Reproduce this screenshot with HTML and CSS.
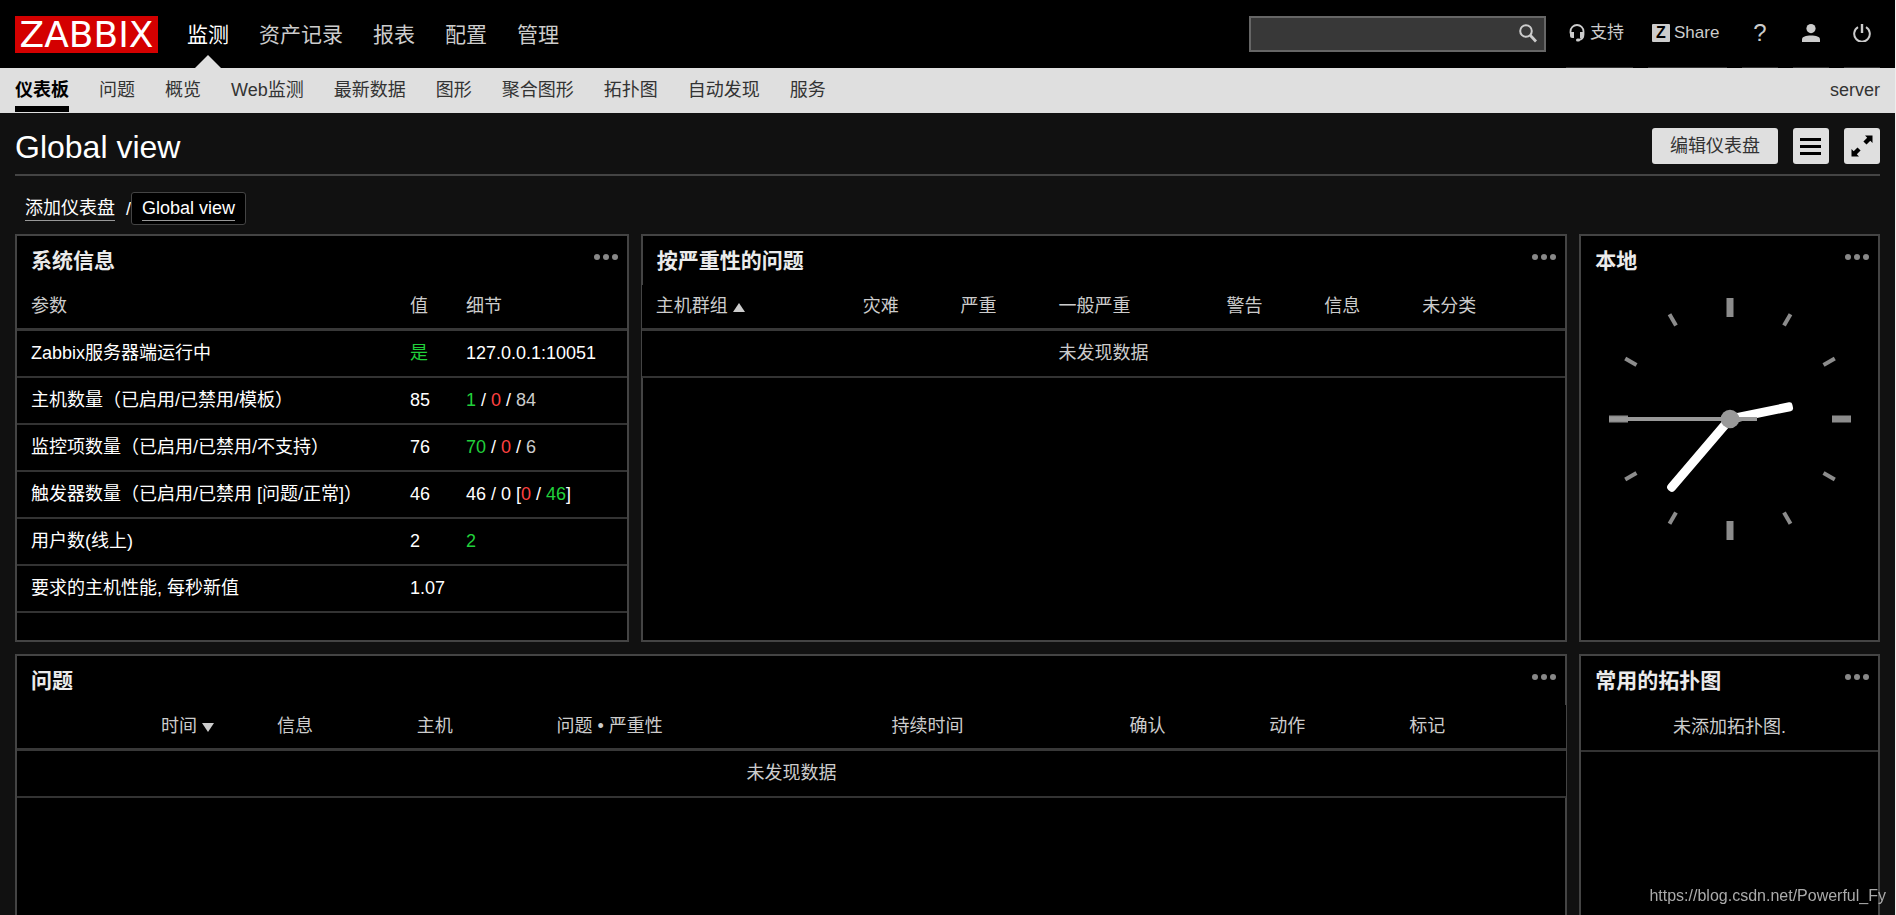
FILE: index.html
```
<!DOCTYPE html>
<html lang="zh-CN">
<head>
    <meta charset="UTF-8">
    <meta name="viewport" content="width=device-width, initial-scale=1.0">
    <title>Global view</title>
    <link rel="stylesheet" href="styles.css">
</head>
<body>
    <header>
        <div class="top-nav">
            <a class="logo" href="#">ZABBIX</a>
            <nav class="main-menu">
                <a class="selected" href="#">监测</a>
                <a href="#">资产记录</a>
                <a href="#">报表</a>
                <a href="#">配置</a>
                <a href="#">管理</a>
            </nav>
            <form class="search">
                <input type="text" aria-label="搜索">
                <button type="button" class="search-button" aria-label="搜索">
                    <svg width="20" height="20" viewBox="0 0 20 20"><circle cx="8" cy="7" r="5.8" fill="none" stroke="currentColor" stroke-width="2"/><path d="M12 11l6 6.5" stroke="currentColor" stroke-width="2.8"/></svg>
                </button>
            </form>
            <div class="user-menu">
                <a class="support" href="#">
                    <svg width="16" height="18" viewBox="0 0 16 18"><path d="M1.5 9.5V7.5a6.5 6.5 0 0 1 13 0v3c0 3-1.5 5-5 5.5" fill="none" stroke="currentColor" stroke-width="1.8"/><path d="M1 8h4v6H3.5A2.500 2.500 0 0 1 1 11.500zM11 8h4v3.5a2.500 2.500 0 0 1-2.500 2.500H11z" fill="currentColor"/><rect x="7" y="14.500" width="4" height="3" rx="1.500" fill="currentColor"/></svg>
                    支持
                </a>
                <a class="share" href="#">
                    <span class="share-logo">Z</span>
                    Share
                </a>
                <a class="icon help" href="#">?</a>
                <a class="icon" href="#" aria-label="用户">
                    <svg width="18" height="18" viewBox="0 0 18 18"><circle cx="9" cy="4.6" r="4.6" fill="currentColor"/><path d="M0 18v-2.500C0 12.500 4 11.500 9 11.500s9 1 9 4V18z" fill="currentColor"/></svg>
                </a>
                <a class="icon" href="#" aria-label="退出">
                    <svg width="18" height="18" viewBox="0 0 18 18"><path d="M5 3.2a7.800 7.800 0 1 0 8 0" fill="none" stroke="currentColor" stroke-width="2"/><path d="M9 0v9" stroke="currentColor" stroke-width="2.400"/></svg>
                </a>
            </div>
        </div>
        <div class="sub-nav">
            <nav class="sub-menu">
                <a class="selected" href="#">仪表板</a>
                <a href="#">问题</a>
                <a href="#">概览</a>
                <a href="#">Web监测</a>
                <a href="#">最新数据</a>
                <a href="#">图形</a>
                <a href="#">聚合图形</a>
                <a href="#">拓扑图</a>
                <a href="#">自动发现</a>
                <a href="#">服务</a>
            </nav>
            <span>server</span>
        </div>
    </header>

    <main>
        <div class="header-title">
            <h1>Global view</h1>
            <div class="controls">
                <button type="button" class="btn">编辑仪表盘</button>
                <button type="button" class="btn btn-icon" aria-label="操作">
                    <svg width="22" height="17" viewBox="0 0 22 17"><path d="M0 1.500h21M0 8.500h21M0 15.500h21" stroke="currentColor" stroke-width="3"/></svg>
                </button>
                <button type="button" class="btn btn-icon" aria-label="全屏">
                    <svg width="22" height="22" viewBox="0 0 22 22"><path d="M14 0.500H21.500V8L19.300 5.800 15.500 9.600 12.400 6.500 16.200 2.700zM8 21.500H0.500V14L2.700 16.200 6.500 12.400 9.600 15.500 5.800 19.300z" fill="currentColor"/></svg>
                </button>
            </div>
        </div>

        <div class="breadcrumbs">
            <a href="#">添加仪表盘</a>
            <span class="slash">/</span>
            <span class="current"><a href="#">Global view</a></span>
        </div>

        <div class="dashboard">
            <section class="widget span-4">
                <div class="widget-head">
                    <h4>系统信息</h4>
                    <button type="button" class="btn-more" aria-label="更多">
                        <svg width="24" height="16" viewBox="0 0 24 16"><circle cx="3" cy="8" r="3"/><circle cx="12" cy="8" r="3"/><circle cx="21" cy="8" r="3"/></svg>
                    </button>
                </div>
                <table class="system-info">
                    <thead>
                        <tr><th class="w-param">参数</th><th class="w-value">值</th><th>细节</th></tr>
                    </thead>
                    <tbody>
                        <tr><td>Zabbix服务器端运行中</td><td class="green">是</td><td>127.0.0.1:10051</td></tr>
                        <tr><td>主机数量（已启用/已禁用/模板）</td><td>85</td><td><span class="green">1</span> / <span class="red">0</span> / <span class="grey">84</span></td></tr>
                        <tr><td>监控项数量（已启用/已禁用/不支持）</td><td>76</td><td><span class="green">70</span> / <span class="red">0</span> / <span class="grey">6</span></td></tr>
                        <tr><td>触发器数量（已启用/已禁用 [问题/正常]）</td><td>46</td><td>46 / 0 [<span class="red">0</span> / <span class="green">46</span>]</td></tr>
                        <tr><td>用户数(线上)</td><td>2</td><td class="green">2</td></tr>
                        <tr><td>要求的主机性能, 每秒新值</td><td>1.07</td><td></td></tr>
                    </tbody>
                </table>
            </section>

            <section class="widget span-6">
                <div class="widget-head">
                    <h4>按严重性的问题</h4>
                    <button type="button" class="btn-more" aria-label="更多">
                        <svg width="24" height="16" viewBox="0 0 24 16"><circle cx="3" cy="8" r="3"/><circle cx="12" cy="8" r="3"/><circle cx="21" cy="8" r="3"/></svg>
                    </button>
                </div>
                <table class="severity">
                    <thead>
                        <tr>
                            <th class="w-group">主机群组<span class="arrow-up"></span></th>
                            <th>灾难</th>
                            <th>严重</th>
                            <th class="w-average">一般严重</th>
                            <th>警告</th>
                            <th>信息</th>
                            <th class="w-last">未分类</th>
                        </tr>
                    </thead>
                    <tbody>
                        <tr><td class="nothing" colspan="7">未发现数据</td></tr>
                    </tbody>
                </table>
            </section>

            <section class="widget span-2">
                <div class="widget-head">
                    <h4>本地</h4>
                    <button type="button" class="btn-more" aria-label="更多">
                        <svg width="24" height="16" viewBox="0 0 24 16"><circle cx="3" cy="8" r="3"/><circle cx="12" cy="8" r="3"/><circle cx="21" cy="8" r="3"/></svg>
                    </button>
                </div>
                <svg class="clock" width="268" height="268" viewBox="-134 -134 268 268">
                    <g stroke="#8c8c8c" stroke-width="7">
                        <path d="M0-121v19M121 0h-19M0 121v-19M-121 0h19"/>
                    </g>
                    <g stroke="#8c8c8c" stroke-width="4">
                        <path d="M0-121v13" transform="rotate(30)"/>
                        <path d="M0-121v13" transform="rotate(60)"/>
                        <path d="M0-121v13" transform="rotate(120)"/>
                        <path d="M0-121v13" transform="rotate(150)"/>
                        <path d="M0-121v13" transform="rotate(210)"/>
                        <path d="M0-121v13" transform="rotate(240)"/>
                        <path d="M0-121v13" transform="rotate(300)"/>
                        <path d="M0-121v13" transform="rotate(330)"/>
                    </g>
                    <rect x="-4.500" y="-64" width="9" height="64" rx="3" fill="#fff" transform="rotate(78.400)"/>
                    <rect x="-4.500" y="-94" width="9" height="94" rx="4" fill="#fff" transform="rotate(220.500)"/>
                    <path d="M-121 0H27" stroke="#999" stroke-width="4"/>
                    <circle r="9.300" fill="#999"/>
                </svg>
            </section>

            <section class="widget span-10">
                <div class="widget-head">
                    <h4>问题</h4>
                    <button type="button" class="btn-more" aria-label="更多">
                        <svg width="24" height="16" viewBox="0 0 24 16"><circle cx="3" cy="8" r="3"/><circle cx="12" cy="8" r="3"/><circle cx="21" cy="8" r="3"/></svg>
                    </button>
                </div>
                <table class="problems">
                    <thead>
                        <tr>
                            <th class="w-timeline"></th>
                            <th class="w-time">时间<span class="arrow-down"></span></th>
                            <th>信息</th>
                            <th>主机</th>
                            <th class="w-problem">问题 • 严重性</th>
                            <th class="w-duration">持续时间</th>
                            <th>确认</th>
                            <th>动作</th>
                            <th class="w-tags">标记</th>
                        </tr>
                    </thead>
                    <tbody>
                        <tr><td class="nothing" colspan="9">未发现数据</td></tr>
                    </tbody>
                </table>
            </section>

            <section class="widget span-2">
                <div class="widget-head">
                    <h4>常用的拓扑图</h4>
                    <button type="button" class="btn-more" aria-label="更多">
                        <svg width="24" height="16" viewBox="0 0 24 16"><circle cx="3" cy="8" r="3"/><circle cx="12" cy="8" r="3"/><circle cx="21" cy="8" r="3"/></svg>
                    </button>
                </div>
                <table>
                    <tbody>
                        <tr><td class="nothing">未添加拓扑图.</td></tr>
                    </tbody>
                </table>
            </section>
        </div>
    </main>

    <div class="watermark">https://blog.csdn.net/Powerful_Fy</div>
</body>
</html>
```

FILE: styles.css
```
* {
    margin: 0;
    padding: 0;
    box-sizing: border-box;
}

body {
    height: 100vh;
    overflow: hidden;
    border-right: 1px solid #eee;
    background-color: #111;
    color: #fff;
    font-family: "Liberation Sans", "Noto Sans CJK SC", sans-serif;
    font-size: 18px;
    line-height: 24px;
}

a {
    color: inherit;
    text-decoration: none;
}

svg {
    display: block;
}

button,
input {
    font: inherit;
    border: none;
}

button {
    cursor: pointer;
}

/* Header */

.top-nav {
    display: flex;
    align-items: center;
    height: 68px;
    padding: 0 15px;
    background-color: #000;
}

.logo {
    width: 143px;
    height: 37px;
    margin-right: 29px;
    background-color: #d40000;
    font-family: "DejaVu Sans", sans-serif;
    font-size: 36px;
    line-height: 37px;
    text-align: center;
}

.main-menu {
    display: flex;
    gap: 30px;
    height: 68px;
    font-size: 21px;
    line-height: 70px;
    color: #ccc;
}

.main-menu .selected {
    position: relative;
    color: #fff;
}

.main-menu .selected::after {
    content: "";
    position: absolute;
    bottom: 0;
    left: 50%;
    margin-left: -13px;
    border: 13px solid transparent;
    border-top-width: 0;
    border-bottom-color: #dfdfdf;
}

.search {
    display: flex;
    width: 297px;
    height: 36px;
    margin-left: auto;
    border: 2px solid #666;
    background-color: #383838;
}

.search input {
    flex: 1;
    min-width: 0;
    padding: 0 8px;
    background: none;
    color: #fff;
    outline: none;
}

.search-button {
    padding: 0 6px;
    background: none;
    color: #ccc;
}

.user-menu {
    display: flex;
    gap: 15px;
    margin-left: 20px;
    font-size: 17px;
    color: #ccc;
}

.user-menu a {
    display: flex;
    align-items: center;
    height: 68px;
    padding-bottom: 1px;
    border-bottom: 1px solid #333;
}

.user-menu .support {
    gap: 5px;
    width: 67px;
    padding-left: 3px;
}

.user-menu .share {
    gap: 4px;
    width: 79px;
    padding-left: 4px;
}

.share-logo {
    width: 18px;
    height: 18px;
    border-radius: 1px;
    background-color: #ccc;
    color: #000;
    font-size: 16px;
    font-weight: bold;
    line-height: 18px;
    text-align: center;
}

.user-menu .icon {
    justify-content: center;
    width: 36px;
}

.user-menu .help {
    font-size: 24px;
}

.sub-nav {
    display: flex;
    justify-content: space-between;
    height: 45px;
    padding: 0 15px;
    background-color: #dfdfdf;
    color: #333;
    line-height: 44px;
}

.sub-menu {
    display: flex;
    gap: 30px;
}

.sub-menu a {
    height: 44px;
}

.sub-menu .selected {
    border-bottom: 6px solid #000;
    color: #000;
    font-weight: bold;
}

/* Title */

main {
    padding: 0 15px;
}

.header-title {
    display: flex;
    justify-content: space-between;
    padding: 15px 0 10px;
    border-bottom: 2px solid #444;
}

h1 {
    font-size: 32px;
    font-weight: normal;
    line-height: 38px;
    height: 36px;
}

.controls {
    display: flex;
    gap: 15px;
}

.btn {
    height: 36px;
    padding: 0 18px;
    border-radius: 3px;
    background-color: #dfdfdf;
    color: #333;
}

.btn-icon {
    display: flex;
    align-items: center;
    justify-content: center;
    width: 36px;
    padding: 0;
    color: #000;
}

.breadcrumbs {
    display: flex;
    align-items: center;
    margin: 16px 0 9px;
    padding-left: 10px;
}

.breadcrumbs a {
    display: block;
    padding-top: 1px;
    border-bottom: 1px solid #999;
    line-height: 23px;
}

.slash {
    margin-left: 11px;
}

.current {
    padding: 3px 10px;
    border: 1px solid #444;
    border-radius: 3px;
    background-color: #000;
}

/* Dashboard */

.dashboard {
    display: grid;
    grid-template-columns: repeat(12, minmax(0, 1fr));
    grid-auto-rows: minmax(408px, auto);
    gap: 12px;
}

.span-2 {
    grid-column: span 2;
}

.span-4 {
    grid-column: span 4;
}

.span-6 {
    grid-column: span 6;
}

.span-10 {
    grid-column: span 10;
}

.widget {
    border: 2px solid #444;
    background-color: #000;
}

.widget-head {
    display: flex;
    align-items: flex-start;
    justify-content: space-between;
    padding: 13px 9px 12px 14px;
}

h4 {
    font-size: 21px;
    color: #ebebeb;
}

.btn-more {
    background: none;
    fill: #888;
}

table {
    width: 100%;
    border-spacing: 0;
    table-layout: fixed;
    background-color: #000;
}

th {
    padding: 9px 9px 10px;
    border-bottom: 3px solid #383838;
    color: #ccc;
    font-weight: normal;
    text-align: left;
    white-space: nowrap;
}

td {
    padding: 10px 9px 11px;
    border-bottom: 2px solid #333;
    white-space: nowrap;
}

th:first-child,
td:first-child {
    padding-left: 14px;
}

td.nothing {
    padding-left: 9px;
    color: #ccc;
    text-align: center;
}

/* these two tables run over the inner edge of the widget border */
.severity {
    width: calc(100% + 1px);
    margin-left: -1px;
}

.problems {
    width: calc(100% + 1px);
}

.system-info .w-param {
    width: 384px;
}

.system-info .w-value {
    width: 56px;
}

.severity .w-group {
    width: 212px;
}

.severity .w-average {
    width: 168px;
}

.severity .w-last {
    width: 152px;
}

.problems .w-timeline {
    width: 135px;
}

.problems .w-time {
    width: 116px;
}

.problems .w-problem {
    width: 335px;
}

.problems .w-duration {
    width: 238px;
}

.problems .w-tags {
    width: 166px;
}

.arrow-up,
.arrow-down {
    display: inline-block;
    margin-left: 5px;
    border: 6px solid transparent;
}

.arrow-up {
    border-top-width: 0;
    border-bottom: 9px solid #ccc;
}

.arrow-down {
    border-bottom-width: 0;
    border-top: 9px solid #ccc;
}

.green {
    color: #21d13b;
}

.red {
    color: #ff4040;
}

.grey {
    color: #ccc;
}

.clock {
    margin: 0 auto;
}

.watermark {
    position: fixed;
    right: 10px;
    bottom: 7px;
    font-size: 16px;
    color: #aaa;
}
```
